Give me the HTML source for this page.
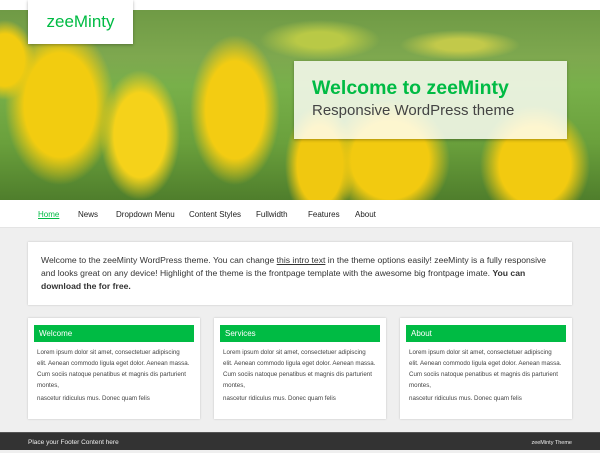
<!DOCTYPE html>
<html><head><meta charset="utf-8"><style>
*{margin:0;padding:0;box-sizing:border-box}
body{width:600px;height:450px;overflow:hidden;background:#efefef;font-family:"Liberation Sans",sans-serif;position:relative}
.top{position:absolute;left:0;top:0;width:600px;height:10px;background:#fff}
.hero{position:absolute;left:0;top:10px;width:600px;height:190px;overflow:hidden;
background:
radial-gradient(ellipse 55px 80px at 60px 95px,#f2cc10 65%,transparent 100%),
radial-gradient(ellipse 40px 65px at 140px 125px,#f5d21a 65%,transparent 100%),
radial-gradient(ellipse 45px 75px at 235px 100px,#f3cc12 65%,transparent 100%),
radial-gradient(ellipse 35px 60px at 320px 155px,#f0c810 65%,transparent 100%),
radial-gradient(ellipse 60px 60px at 390px 150px,#f2ca10 65%,transparent 100%),
radial-gradient(ellipse 55px 60px at 535px 155px,#f2ca10 65%,transparent 100%),
radial-gradient(ellipse 30px 40px at 5px 50px,#f2cc10 65%,transparent 100%),
radial-gradient(ellipse 60px 20px at 320px 30px,#b9c946 40%,transparent 100%),
radial-gradient(ellipse 60px 15px at 460px 35px,#c2c94a 40%,transparent 100%),
linear-gradient(#6f9a45 0,#7ea84f 25%,#78b04a 40%,#6aa03c 70%,#4f7e2c 100%)}
.logo{position:absolute;left:28px;top:0;width:105px;height:44px;background:#fff;box-shadow:0 1px 3px rgba(0,0,0,.3);color:#00bb44;font-size:17px;text-align:center;line-height:44px}
.cap{position:absolute;left:294px;top:61px;width:273px;height:78px;background:rgba(255,255,250,.82);box-shadow:0 1px 3px rgba(0,0,0,.3);padding:15px 0 0 18px}
.cap h1{color:#00bb44;font-size:19.5px;font-weight:bold;line-height:24px}
.cap p{color:#444;font-size:15px;line-height:22px}
.nav{position:absolute;left:0;top:200px;width:600px;height:28px;background:#fff;border-bottom:1px solid #e4e4e4;font-size:8px;color:#222}
.nav span{position:absolute;top:10px}
.box{position:absolute;background:#fff;box-shadow:0 0 2px rgba(0,0,0,.2)}
.intro{left:28px;top:242px;width:544px;height:63px;padding:12px 13px;font-size:8.6px;line-height:13px;color:#333}
.card{top:318px;width:172px;height:101px;padding:7px 6px}
.card h3{background:#00bb44;color:#fff;font-size:8px;font-weight:normal;height:17px;line-height:17px;padding-left:5px}
.card p{font-size:6.2px;line-height:11px;color:#444;padding:5px 3px 0;white-space:nowrap}
.card p+p{padding-top:2px}
.foot{position:absolute;left:0;top:432px;width:600px;height:18px;background:#333;color:#eee;font-size:6.5px;line-height:20px;border-top:1px solid #555}
</style></head><body>
<div class="top"></div>
<div class="hero"></div>
<div class="logo">zeeMinty</div>
<div class="cap"><h1>Welcome to zeeMinty</h1><p>Responsive WordPress theme</p></div>
<div class="nav"><span style="left:38px;color:#00bb44;text-decoration:underline">Home</span><span style="left:78px">News</span><span style="left:116px">Dropdown Menu</span><span style="left:189px">Content Styles</span><span style="left:256px">Fullwidth</span><span style="left:308px">Features</span><span style="left:355px">About</span></div>
<div class="box intro">Welcome to the zeeMinty WordPress theme. You can change <u>this intro text</u> in the theme options easily! zeeMinty is a fully responsive and looks great on any device! Highlight of the theme is the frontpage template with the awesome big frontpage imate. <b>You can download the for free.</b></div>
<div class="box card" style="left:28px"><h3>Welcome</h3><p>Lorem ipsum dolor sit amet, consectetuer adipiscing<br>elit. Aenean commodo ligula eget dolor. Aenean massa.<br>Cum sociis natoque penatibus et magnis dis parturient<br>montes,</p><p>nascetur ridiculus mus. Donec quam felis</p></div>
<div class="box card" style="left:214px"><h3>Services</h3><p>Lorem ipsum dolor sit amet, consectetuer adipiscing<br>elit. Aenean commodo ligula eget dolor. Aenean massa.<br>Cum sociis natoque penatibus et magnis dis parturient<br>montes,</p><p>nascetur ridiculus mus. Donec quam felis</p></div>
<div class="box card" style="left:400px"><h3>About</h3><p>Lorem ipsum dolor sit amet, consectetuer adipiscing<br>elit. Aenean commodo ligula eget dolor. Aenean massa.<br>Cum sociis natoque penatibus et magnis dis parturient<br>montes,</p><p>nascetur ridiculus mus. Donec quam felis</p></div>
<div class="foot"><span style="position:absolute;left:28px">Place your Footer Content here</span><span style="position:absolute;right:28px;font-size:5.5px">zeeMinty Theme</span></div>
</body></html>
